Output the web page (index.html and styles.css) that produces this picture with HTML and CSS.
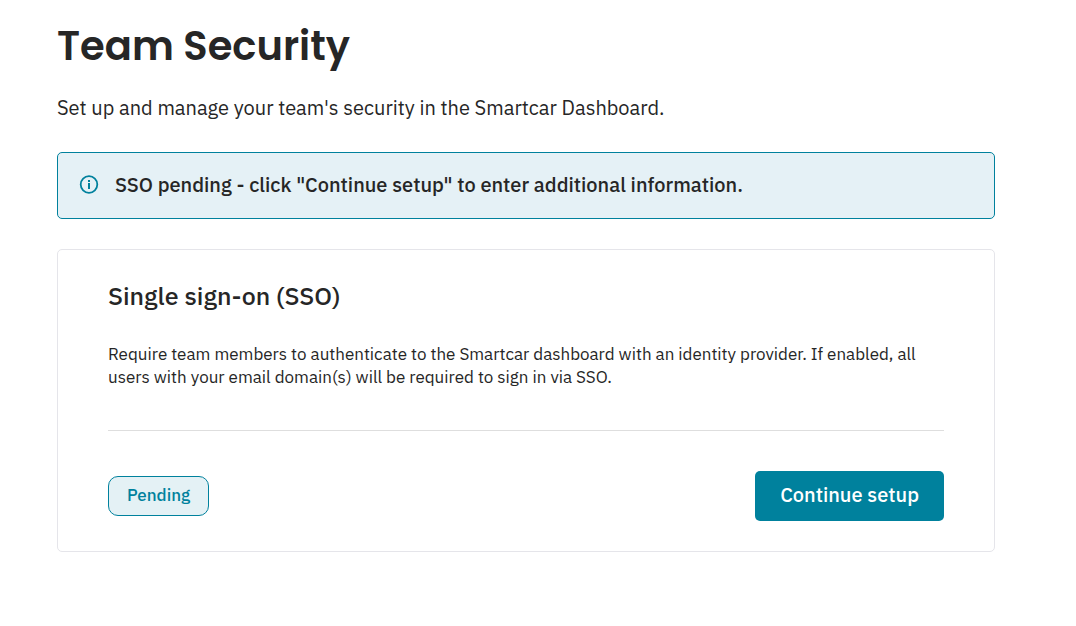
FILE: index.html
```html
<!DOCTYPE html>
<html lang="en">
<head>
    <meta charset="UTF-8">
    <meta name="viewport" content="width=device-width, initial-scale=1.0">
    <title>Team Security</title>
    <link rel="stylesheet" href="styles.css">
</head>
<body>
    <main class="container">
        <h1>Team Security</h1>
        <p class="intro">Set up and manage your team's security in the Smartcar Dashboard.</p>

        <div class="alert" role="status">
            <svg class="alert-icon" viewBox="0 0 20 20" aria-hidden="true">
                <circle cx="10" cy="9.5" r="8.3" fill="none" stroke="currentColor" stroke-width="1.8"/>
                <path d="M9 5H11V7H9ZM9 8H11V14H9Z" fill="currentColor"/>
            </svg>
            <span>SSO pending - click "Continue setup" to enter additional information.</span>
        </div>

        <section class="card">
            <h2>Single sign-on (SSO)</h2>
            <p class="description">Require team members to authenticate to the Smartcar dashboard with an identity provider. If enabled, all users with your email domain(s) will be required to sign in via SSO.</p>
            <div class="card-footer">
                <span class="status">Pending</span>
                <button type="button" class="continue-btn">Continue setup</button>
            </div>
        </section>
    </main>
</body>
</html>
```

FILE: styles.css
```css
* {
    box-sizing: border-box;
}
body {
    margin: 0;
    font-family: "IBM Plex Sans", Roboto, sans-serif;
    color: #262626;
    background-color: #fff;
}
.container {
    padding: 20px 81px 74px 57px;
}
h1 {
    margin: 0;
    font-family: Poppins, Inter, sans-serif;
    font-size: 40px;
    font-weight: 600;
    line-height: 52px;
}
.intro {
    margin: 20px 0 28px;
    font-size: 20px;
    line-height: 32px;
}
.alert {
    display: flex;
    align-items: center;
    gap: 16px;
    margin-bottom: 30px;
    padding: 16px 21px 17px;
    border: 1px solid #00819d;
    border-radius: 5px;
    background-color: #e5f1f6;
    font-size: 20px;
    font-weight: 500;
    line-height: 32px;
}
.alert-icon {
    flex: none;
    width: 20px;
    height: 20px;
    color: #00819d;
}
.card {
    padding: 30px 50px;
    border: 1px solid #e5e5ea;
    border-radius: 5px;
}
h2 {
    margin: 0 0 32px;
    font-size: 25px;
    font-weight: 500;
    line-height: 31px;
}
.description {
    margin: 0 0 41px;
    font-size: 17px;
    line-height: 23px;
}
.card-footer {
    display: flex;
    align-items: center;
    justify-content: space-between;
    padding-top: 40px;
    border-top: 1px solid #dedede;
}
.status {
    padding: 6px 18px 8px;
    border: 1px solid #00819d;
    border-radius: 10px;
    background-color: #e4f1f5;
    color: #00819d;
    font-size: 17px;
    font-weight: 500;
    line-height: 24px;
}
.continue-btn {
    padding: 8px 25px 10px;
    border: none;
    border-radius: 5px;
    background-color: #00819d;
    color: #fff;
    font-family: inherit;
    font-size: 20px;
    font-weight: 500;
    line-height: 32px;
    cursor: pointer;
}
```
